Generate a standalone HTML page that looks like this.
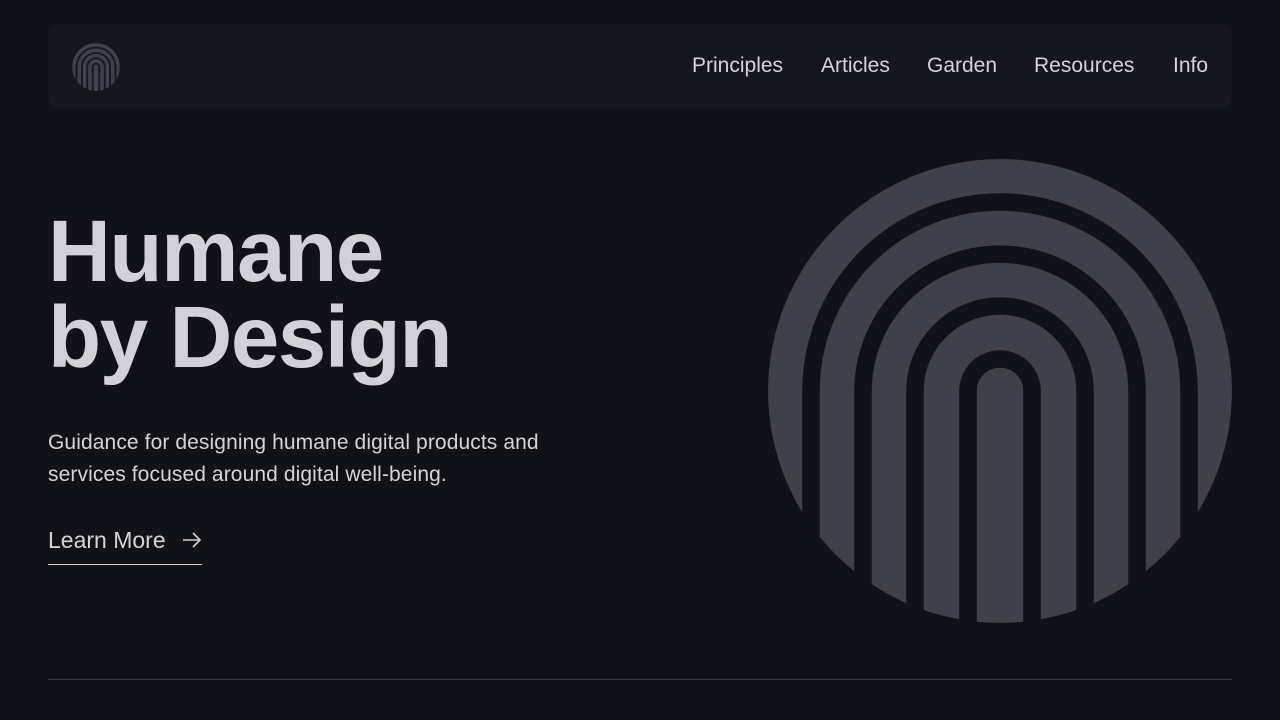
<!DOCTYPE html>
<html><head><meta charset="utf-8"><style>
*{margin:0;padding:0;box-sizing:border-box}
body{width:1280px;height:720px;background:#111118;font-family:"Liberation Sans",Arial,sans-serif;color:#d4d4d8;position:relative;overflow:hidden}
.nav{position:absolute;left:48px;top:24px;width:1184px;height:84px;background:#16171e;border-radius:12px}
.nav a{position:absolute;top:29px;font-size:21px;color:#d4d4d8;text-decoration:none;line-height:26px;white-space:nowrap}
h1{position:absolute;left:48px;top:209px;font-size:87px;line-height:86px;font-weight:700;letter-spacing:-1.4px;color:#d1d1d7}
p{position:absolute;left:48px;top:427px;font-size:21px;line-height:32px;letter-spacing:0.1px;color:#d4d4d8;width:560px}
.lm{position:absolute;left:48px;top:526px;width:154px;height:39px;border-bottom:1px solid #d4d4d8;font-size:23px;line-height:28px;color:#d4d4d8}
.hr{position:absolute;left:48px;top:679px;width:1184px;height:1px;background:#3a3a42}
</style></head><body>
<div class="nav">
<svg style="position:absolute;left:24px;top:19px" width="48" height="48" viewBox="767 158 466 466">
<defs><clipPath id="c1"><circle cx="1000" cy="391" r="232"/></clipPath></defs>
<g clip-path="url(#c1)"><circle cx="1000" cy="391" r="232" fill="#40404c"/>
<g fill="none" stroke="#16171e" stroke-width="18">
<path d="M811 700V391A189 189 0 0 1 1189 391V700"/><path d="M863 700V391A137 137 0 0 1 1137 391V700"/><path d="M915 700V391A85 85 0 0 1 1085 391V700"/><path d="M968 700V391A32 32 0 0 1 1032 391V700"/></g></g></svg>
<a style="left:644px">Principles</a><a style="left:773px">Articles</a><a style="left:879px">Garden</a><a style="left:986px">Resources</a><a style="left:1125px">Info</a>
</div>
<h1>Humane<br>by Design</h1>
<p>Guidance for designing humane digital products and services focused around digital well-being.</p>
<div class="lm">Learn More <svg style="position:absolute;left:134px;top:5px" width="20" height="18" viewBox="0 0 20 18"><path d="M1 9H18M11 2L18 9L11 16" fill="none" stroke="#d4d4d8" stroke-width="1.6"/></svg></div>
<svg style="position:absolute;left:0;top:0" width="1280" height="720">
<defs><clipPath id="c2"><circle cx="1000" cy="391" r="232"/></clipPath></defs>
<g clip-path="url(#c2)"><circle cx="1000" cy="391" r="232" fill="#40404a"/>
<g fill="none" stroke="#111118" stroke-width="17.5">
<path d="M811 700V391A189 189 0 0 1 1189 391V700"/><path d="M863 700V391A137 137 0 0 1 1137 391V700"/><path d="M915 700V391A85 85 0 0 1 1085 391V700"/><path d="M968 700V391A32 32 0 0 1 1032 391V700"/></g></g></svg>
<div class="hr"></div>
</body></html>
